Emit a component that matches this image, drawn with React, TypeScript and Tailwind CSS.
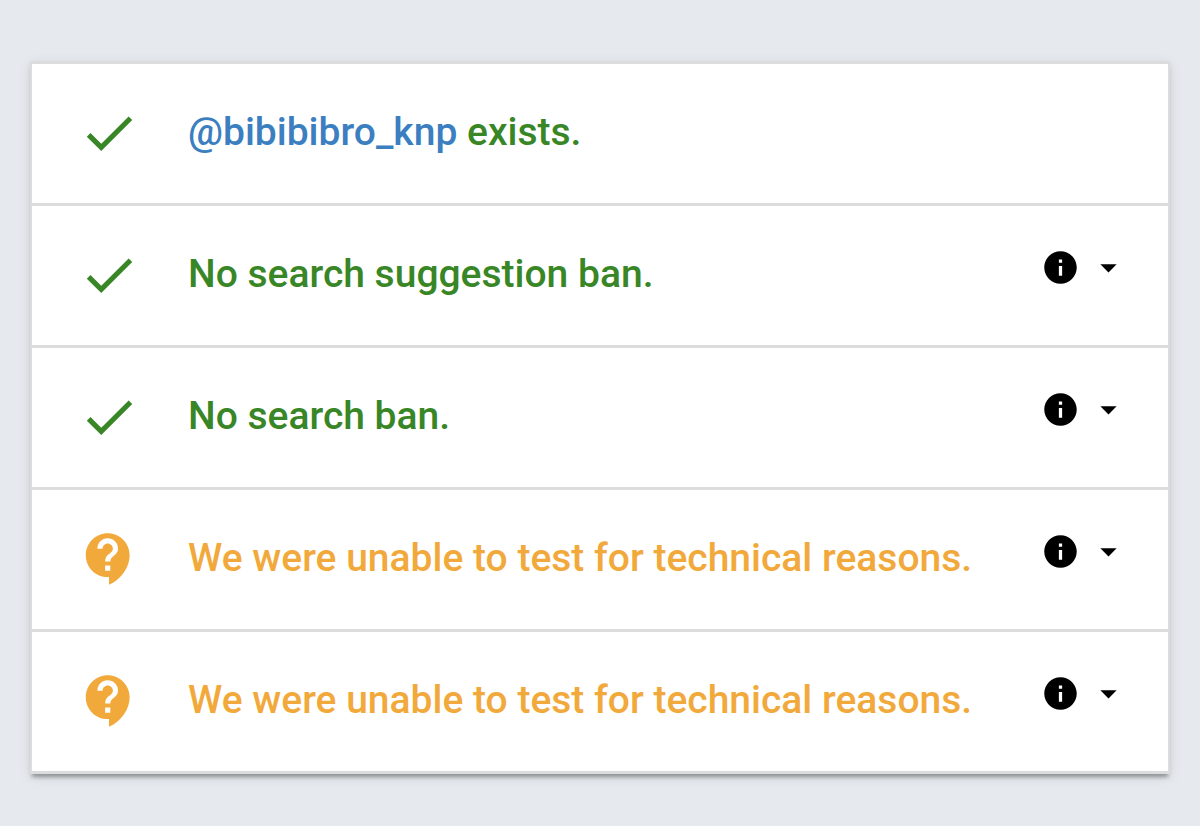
import React from 'react';
import { MdCheck, MdInfo, MdArrowDropDown } from 'react-icons/md';

interface TestResult {
  id: string;
  status: 'ok' | 'unknown';
  text: string;
  handle?: string;
}

const RESULTS: TestResult[] = [
  { id: 'exists', status: 'ok', text: 'exists.', handle: '@bibibibro_knp' },
  { id: 'suggestion', status: 'ok', text: 'No search suggestion ban.' },
  { id: 'search', status: 'ok', text: 'No search ban.' },
  { id: 'ghost', status: 'unknown', text: 'We were unable to test for technical reasons.' },
  { id: 'reply', status: 'unknown', text: 'We were unable to test for technical reasons.' },
];

const UnknownIcon: React.FC<{ size: number; className?: string }> = ({ size, className }) => (
  <svg viewBox="0 0 24 24" width={size} height={size} fill="currentColor" className={className}>
    <path d="M11.5 2C6.81 2 3 5.81 3 10.5S6.81 19 11.5 19h.5v3c4.86-2.34 8-7 8-11.5C20 5.81 16.19 2 11.5 2zm1 14.5h-2v-2h2v2zm0-3.5h-2c0-3.25 3-3 3-5 0-1.1-.9-2-2-2s-2 .9-2 2h-2c0-2.21 1.79-4 4-4s4 1.79 4 4c0 2.5-3 2.75-3 5z" />
  </svg>
);

const ResultRow: React.FC<{ result: TestResult }> = ({ result }) => {
  const ok = result.status === 'ok';
  const Icon = ok ? MdCheck : UnknownIcon;

  return (
    <li className={`flex items-start border-b-3 border-[#dcdcdc] pl-[46px] pr-10 pt-[38px] pb-[39px] ${ok ? 'text-[#388626]' : 'text-[#f2a93b]'}`}>
      <Icon size={62} className="mr-12 shrink-0" />
      <p className="flex-1 text-[39px] leading-[60px] font-medium">
        {result.handle && <a href="#profile" className="text-[#3b7fc0]">{result.handle}</a>}
        {result.handle && ' '}
        {result.text}
      </p>
      {!result.handle && (
        <button type="button" aria-label="Details" className="mt-1 flex items-center gap-[9px] text-black">
          <MdInfo size={39} />
          <MdArrowDropDown size={39} />
        </button>
      )}
    </li>
  );
};

export default function App() {
  return (
    <main className="min-h-screen bg-[#e6eaef] px-[30px] pt-[61px] pb-12 font-['Roboto',sans-serif]">
      <ul className="border-x-2 border-t-3 border-[#dcdcdc] bg-white shadow-[0_6px_4px_-3px_rgba(0,0,0,0.2),0_4px_4px_-1px_rgba(0,0,0,0.16),0_3px_12px_0_rgba(0,0,0,0.1)]">
        {RESULTS.map((result) => <ResultRow key={result.id} result={result} />)}
      </ul>
    </main>
  );
}
